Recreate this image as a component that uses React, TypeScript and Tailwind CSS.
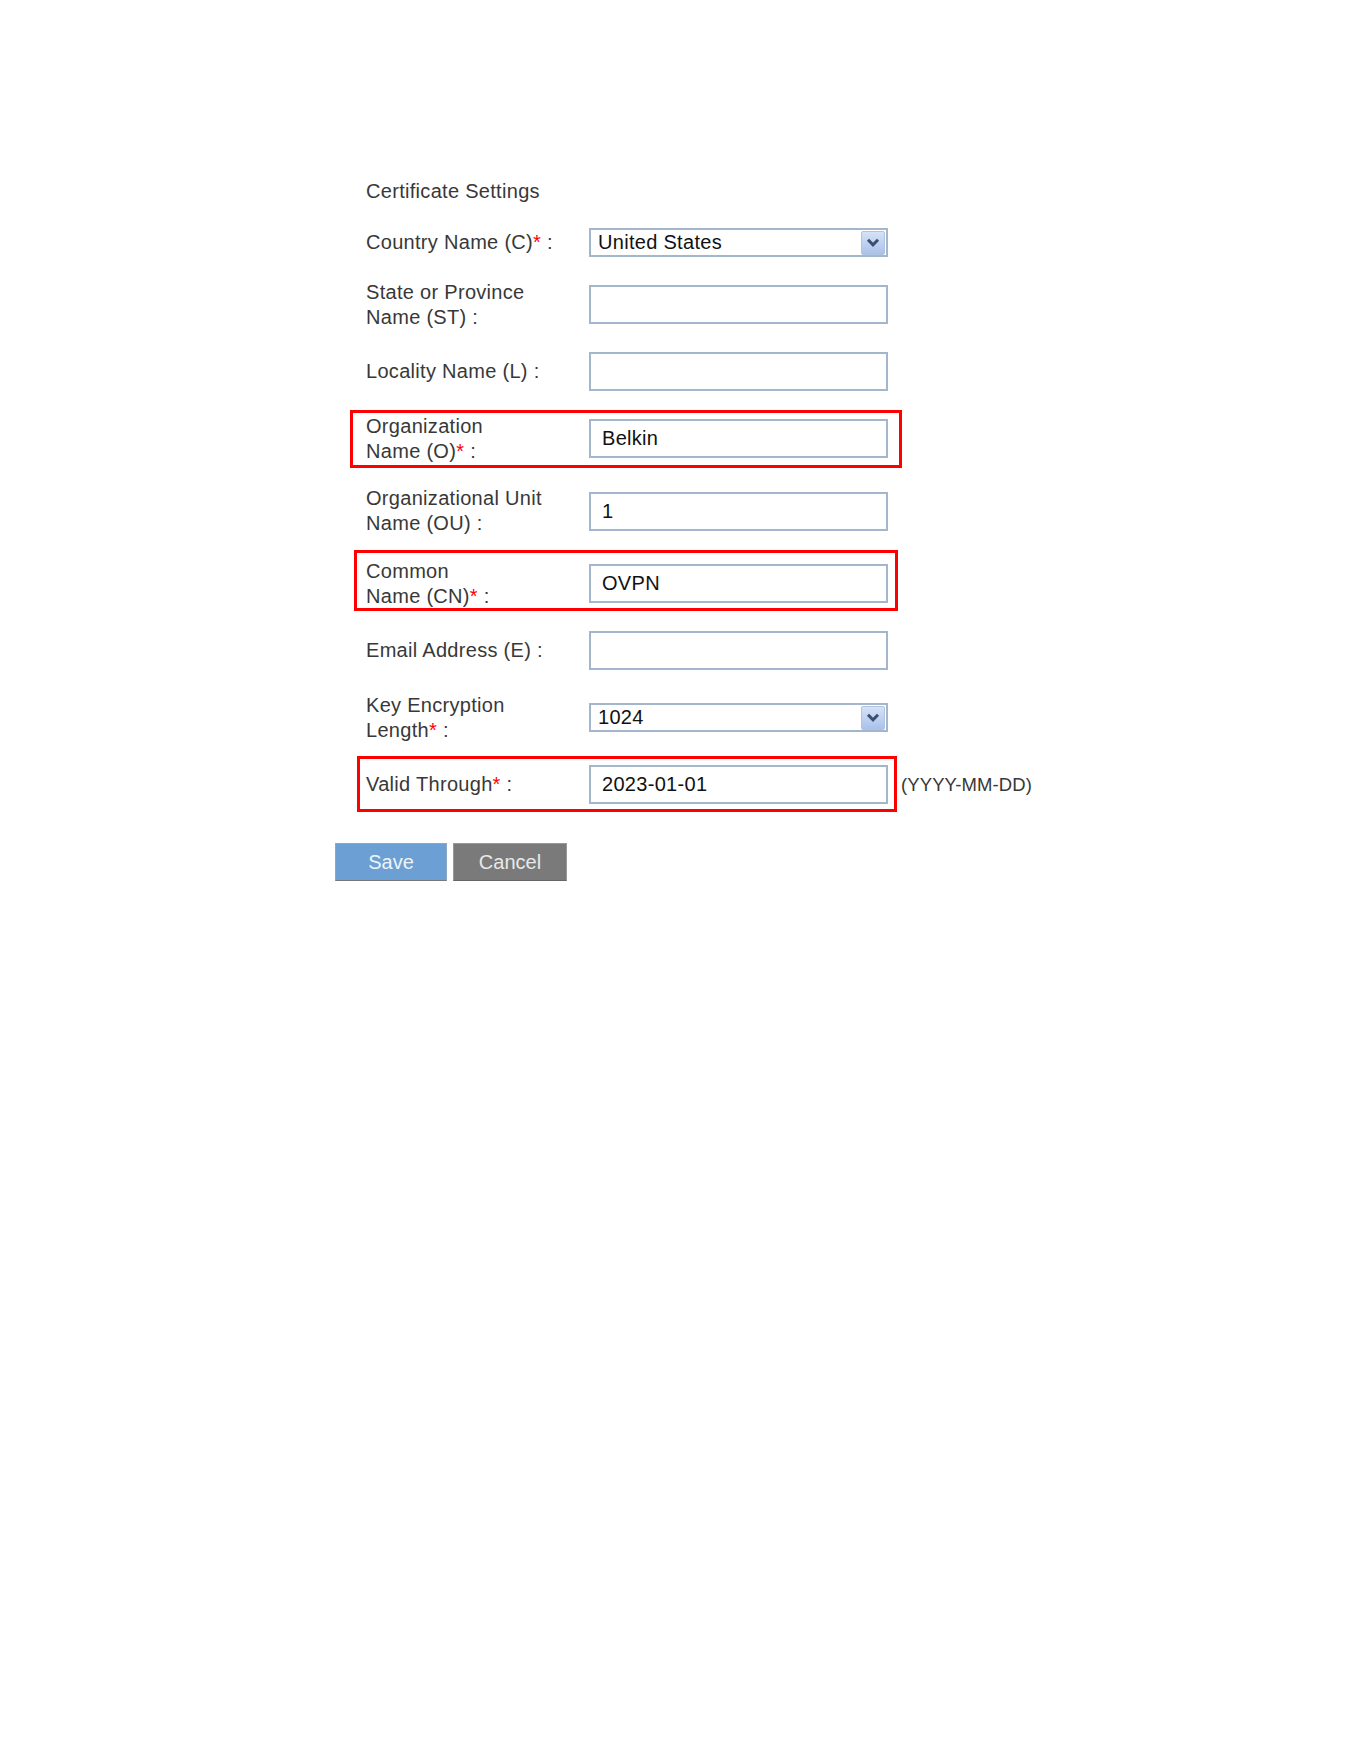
import React from "react";

type Field = {
  label: React.ReactNode;
  kind: "text" | "select";
  value?: string;
  rowH: string;
  highlight?: string;
  suffix?: string;
};

const Req = () => <span className="text-[#ff0000]">*</span>;

const fields: Field[] = [
  {
    label: (
      <>
        Country Name (C)
        <Req /> :
      </>
    ),
    kind: "select",
    value: "United States",
    rowH: "h-[29px]",
  },
  {
    label: (
      <>
        State or Province
        <br />
        Name (ST) :
      </>
    ),
    kind: "text",
    rowH: "h-[50px]",
  },
  { label: "Locality Name (L) :", kind: "text", rowH: "h-[39px]" },
  {
    label: (
      <>
        Organization
        <br />
        Name (O)
        <Req /> :
      </>
    ),
    kind: "text",
    value: "Belkin",
    rowH: "h-[50px]",
    highlight: "-left-[16px] -right-[14px] -top-[4px] -bottom-[4px]",
  },
  {
    label: (
      <>
        Organizational Unit
        <br />
        Name (OU) :
      </>
    ),
    kind: "text",
    value: "1",
    rowH: "h-[50px]",
  },
  {
    label: (
      <>
        Common
        <br />
        Name (CN)
        <Req /> :
      </>
    ),
    kind: "text",
    value: "OVPN",
    rowH: "h-[50px]",
    highlight: "-left-[12px] -right-[10px] -top-[9px] -bottom-[2px]",
  },
  { label: "Email Address (E) :", kind: "text", rowH: "h-[39px]" },
  {
    label: (
      <>
        Key Encryption
        <br />
        Length
        <Req /> :
      </>
    ),
    kind: "select",
    value: "1024",
    rowH: "h-[50px]",
  },
  {
    label: (
      <>
        Valid Through
        <Req /> :
      </>
    ),
    kind: "text",
    value: "2023-01-01",
    rowH: "h-[39px]",
    highlight: "-left-[9px] -right-[9px] -top-[9px] -bottom-[8px]",
    suffix: "(YYYY-MM-DD)",
  },
];

const font = "font-['Liberation_Sans',Arial,sans-serif]";

function SelectBox({ value }: { value?: string }) {
  return (
    <div className="flex h-[29px] w-[299px] shrink-0 items-center justify-between border-2 border-[#a3b6cb] bg-white pl-[7px] pr-[1px]">
      <span className="text-[20px] tracking-[0.3px] leading-[25px] text-[#111]">{value}</span>
      <span className="flex h-[24px] w-[24px] items-center justify-center rounded-[2px] border border-[#b0c4e2] bg-gradient-to-b from-[#d6e2f5] to-[#a9c2ea]">
        <svg width="14" height="9" viewBox="0 0 14 9">
          <path d="M2 1.8 L7 6.8 L12 1.8" fill="none" stroke="#3b4e74" strokeWidth="3" />
        </svg>
      </span>
    </div>
  );
}

function TextBox({ value }: { value?: string }) {
  return (
    <input
      type="text"
      defaultValue={value ?? ""}
      className={`${font} h-[39px] w-[299px] shrink-0 border-2 border-[#a3b6cb] bg-white pl-[11px] text-[20px] tracking-[0.3px] text-[#111] outline-none`}
    />
  );
}

export default function App() {
  return (
    <div className={`${font} min-h-[1761px] bg-white pl-[335px] pt-[179px] text-[#383838]`}>
      <div className="flex flex-col gap-[22.5px] pl-[31px]">
        <div className="mb-[1.5px] text-[20px] leading-[25px] tracking-[0.3px]">Certificate Settings</div>

        {fields.map((f, i) => (
          <div key={i} className={`flex items-center ${f.rowH}`}>
            <div className="relative flex items-center">
              <div className="w-[223px] shrink-0 text-[20px] leading-[25px] tracking-[0.3px]">{f.label}</div>
              {f.kind === "select" ? <SelectBox value={f.value} /> : <TextBox value={f.value} />}
              {f.highlight && (
                <span className={`pointer-events-none absolute border-[3px] border-[#ff0000] ${f.highlight}`} />
              )}
            </div>
            {f.suffix && (
              <span className="ml-[13px] whitespace-nowrap text-[18.5px] tracking-[0.1px]">{f.suffix}</span>
            )}
          </div>
        ))}
      </div>

      <div className="mt-[39px] flex gap-[6px]">
        <button className="h-[38px] w-[112px] border border-[#8da7c3] border-b-[#777] bg-[#6c9fd3] text-[20px] text-[#eef3f9]">
          Save
        </button>
        <button className="h-[38px] w-[114px] border border-[#999] border-b-[#666] bg-[#7a7a7a] text-[20px] text-[#e8e8e8]">
          Cancel
        </button>
      </div>
    </div>
  );
}
